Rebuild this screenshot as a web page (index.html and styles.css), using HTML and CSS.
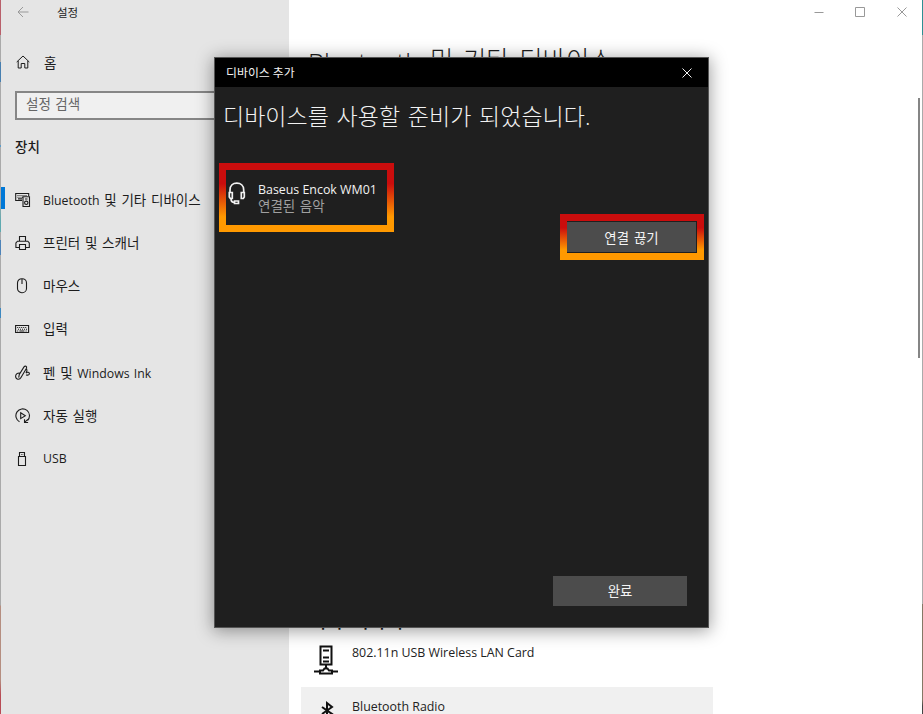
FILE: index.html
```html
<!DOCTYPE html>
<html lang="ko">
<head>
<meta charset="utf-8">
<title>설정</title>
<link rel="stylesheet" href="styles.css">
</head>
<body>
<div class="window">
  <div class="edge edge-left"></div>
  <aside class="sidebar">
    <header class="side-title">
      <svg class="back" width="12" height="12" viewBox="0 0 12 12"><path d="M11.5 6H1M6 1L1 6l5 5"/></svg>
      <span>설정</span>
    </header>
    <a class="home">
      <svg width="14" height="14" viewBox="0 0 14 14"><path d="M.7 7L7 1l6.300 6M2.200 6v7h3V8.500h3.600V13h3V6"/></svg>
      <span>홈</span>
    </a>
    <div class="search">설정 검색</div>
    <h2 class="group">장치</h2>
    <nav class="nav">
      <a class="item active">
        <svg width="16" height="16" viewBox="0 0 16 16"><path d="M7 8.500H.7v-7h13V4M2.500 3.500h1m1 0h1m1 0h1m1 0h1m1 0h1M2.500 5.200h1m1 0h1m1 0h1M3 6.900h4M8 4.800h6.500v9.700H8zM10 7h2.500"/><circle cx="11.250" cy="10.800" r="1.700"/></svg>
        <span><b class="latin">Bluetooth</b> 및 기타 디바이스</span></a>
      <a class="item">
        <svg width="16" height="16" viewBox="0 0 16 16"><path d="M4.500 6V1.500h6V6M4 12.500H.9V8L2.500 6.200h10.300L14.300 8v4.500H11M4.500 9.500h6v5h-6z"/></svg>
        <span>프린터 및 스캐너</span></a>
      <a class="item">
        <svg width="16" height="16" viewBox="0 0 16 16"><rect x="2.500" y=".7" width="9" height="14" rx="4.300"/><path d="M7 1v5"/></svg>
        <span>마우스</span></a>
      <a class="item">
        <svg width="16" height="16" viewBox="0 0 16 16"><path d="M.6 4.500h13v7H.6zM2.200 6.500h1m1 0h1m1 0h1m1 0h1m1 0h1M3 8.200h1m1 0h1m1 0h1m1 0h1m1 0h1M2.200 10h1m1.200 0h5m1.200 0h1"/></svg>
        <span>입력</span></a>
      <a class="item">
        <svg width="16" height="16" viewBox="0 0 16 16"><path d="M5 8C2 7.700.6 9.500.6 11.300c0 3.400 4 4 5.400 1.200l5.500-9.300c.7-1.800-1.300-2.800-2.500-1.300L4.300 9.500l-.6 3.200M11.700 4c.8 1.500.2 2.500-.7 4 1.500-1.300 3.200-.8 3.400.6.100 1.500-2 1.700-3.400 1.400"/></svg>
        <span>펜 및 <b class="latin">Windows Ink</b></span></a>
      <a class="item">
        <svg width="16" height="16" viewBox="0 0 16 16"><path d="M4.500 13.700A6.800 6.800 0 1 1 12.500 12.500M9.500 11.200v3.300h3.600M9.500 14.300l3.300-3M5.700 4.800l4.600 2.900-4.600 2.900z"/></svg>
        <span>자동 실행</span></a>
      <a class="item">
        <svg width="16" height="16" viewBox="0 0 16 16"><path d="M3.500 5.500h7v9h-7zM4.500 5.500v-4h5v4M6 3.500h.6m1 0h.6"/></svg>
        <span><b class="latin">USB</b></span></a>
    </nav>
  </aside>

  <main class="content">
    <div class="controls">
      <svg width="10" height="10" viewBox="0 0 10 10"><path d="M.5 5.500h9"/></svg>
      <svg width="10" height="10" viewBox="0 0 10 10"><path d="M.5.500h9v9h-9z"/></svg>
      <svg width="10" height="10" viewBox="0 0 10 10"><path d="M.5.500l9 9M9.500.500l-9 9"/></svg>
    </div>
    <h1 class="page-title"><span class="title-latin">Bluetooth</span> 및 기타 디바이스</h1>
    <section class="others">
      <h2>기타 디바이스</h2>
      <div class="device">
        <svg width="24" height="30" viewBox="0 0 24 30"><path d="M6.500 1.500h11v18h-11zM9 5.500h6M9 12.500h6M9 16.500h6M12 20v3M0 26.500h6m12 0h6M6 28.500h12v-3h-3l-1.500-2h-3L9 25.500H6z"/></svg>
        <span>802.11n USB Wireless LAN Card</span>
      </div>
      <div class="device shaded">
        <svg width="24" height="30" viewBox="0 0 24 30"><path d="M8 8l10 7-5 5V4l5 4-10 7"/></svg>
        <span>Bluetooth Radio</span>
      </div>
    </section>
  </main>
  <div class="edge edge-right"></div>
  <div class="scroll-thumb"></div>
</div>

<section class="dialog">
  <header class="dialog-bar">
    <span>디바이스 추가</span>
    <svg width="10" height="10" viewBox="0 0 10 10"><path d="M.5.500l9 9M9.500.500l-9 9"/></svg>
  </header>
  <h1 class="dialog-title">디바이스를 사용할 준비가 되었습니다.</h1>
  <div class="paired frame">
    <svg width="18" height="24" viewBox="0 0 18 24"><path d="M2 11V8C2 3.500 5 1.200 8.800 1.200S15.700 3.500 15.700 8v3M1.300 10.500h3v6h-2l-1-1.500zM13.300 10.500h3V15l-1 1.500h-2zM3 16.500c0 3 1.500 4 3.500 4M6.500 19h4v2.500h-4z"/></svg>
    <div class="paired-text">
      <div class="device-name">Baseus Encok WM01</div>
      <div class="device-state">연결된 음악</div>
    </div>
  </div>
  <div class="disconnect frame"><button>연결 끊기</button></div>
  <button class="done">완료</button>
</section>
</body>
</html>
```

FILE: styles.css
```css
* { box-sizing: border-box; }
body {
  margin: 0;
  width: 923px;
  height: 714px;
  overflow: hidden;
  position: relative;
  background: #fff;
  color: #1c1c1c;
  font-family: "Open Sans", "Noto Sans CJK KR", sans-serif;
  font-size: 12.5px;
}
h1, h2 { margin: 0; font-weight: 400; }
span, h1, h2 { white-space: nowrap; }
svg { fill: none; stroke: currentColor; flex: none; display: block; }

.window { display: flex; width: 923px; height: 714px; overflow: hidden; }
.edge { width: 1px; flex: none; }
.edge-left { background: linear-gradient(#b9606b 0 35px, #aaa 35px 62px, #477fb0 62px 82px, #aaa 82px 145px, #5e9cc8 145px 147px, #aaa 147px 198px, #5eaab0 222px 232px, #aaa 232px 240px, #4d83b8 240px 255px, #aaa 255px 308px, #3d88c0 308px 318px, #aaa 318px 605px, #b58e80 606px 680px, #b84b55 695px); }
.edge-right { background: linear-gradient(#2d8f93 0 35px, #aaa 35px 604px, #857866 604px 700px, #444 706px); }
.sidebar { width: 288px; flex: none; background: #e5e5e5; }
.side-title { display: flex; align-items: center; height: 24px; padding-left: 16px; gap: 28px; font-size: 11.5px; }
.back { color: #999; }
.home { display: flex; align-items: center; height: 28px; margin: 24px 0 15px; padding-left: 15px; gap: 14px; font-size: 13.5px; }
.home span { margin-top: -1px; }
.search {
  height: 29px;
  margin-left: 14px;
  border: 2px solid #868686;
  background: #f0f0f0;
  color: #666;
  padding-left: 9px;
  line-height: 23px;
  font-size: 13.5px;
  word-spacing: 1px;
}
.group { margin: 17px 0 0 14px; height: 20px; line-height: 20px; font-size: 13.5px; font-weight: 500; }
.nav { margin-top: 21px; }
.item { display: flex; align-items: center; height: 43.25px; padding-left: 14px; gap: 12px; position: relative; font-size: 13.5px; }
.item svg { stroke-width: 1.1; }
.active::before { content: ""; position: absolute; left: 0; top: 9px; width: 4px; height: 22px; background: #0078d7; }
.item span { word-spacing: 1.2px; margin-top: -2px; }
.latin { font-weight: 400; font-size: 12.3px; word-spacing: 1px; }

.content { flex: 1; background: #fff; }
.controls { display: flex; justify-content: flex-end; gap: 31.5px; height: 24px; align-items: center; padding-right: 15.5px; color: #999; }
.page-title { margin: 17px 0 0 19px; height: 36px; line-height: 36px; font-size: 25.4px; font-weight: 300; word-spacing: 3px; }
.title-latin { position: relative; top: 3px; }
.others { margin-top: 532px; padding-left: 12px; width: 424px; }
.others h2 { height: 24px; line-height: 24px; padding-left: 8px; font-size: 18.8px; font-weight: 500; word-spacing: 3px; }
.device { display: flex; height: 54px; padding: 10px 0 0 13px; gap: 14px; color: #222; }
.device svg { stroke-width: 2; color: #111; margin-top: 2px; }
.device span { line-height: 20px; font-size: 12.4px; }
.shaded { background: #f0f0f0; }
.scroll-thumb { position: absolute; left: 918px; top: 98px; width: 2px; height: 260px; background: #858585; }

.dialog {
  position: absolute;
  left: 214px;
  top: 57px;
  width: 495px;
  height: 571px;
  border: 1px solid #555;
  background: #1f1f1f;
  color: #f2f2f2;
  box-shadow: 0 2px 16px 1px rgba(0, 0, 0, .38);
}
.dialog-bar { display: flex; justify-content: space-between; align-items: center; height: 29px; padding: 0 16px 0 11px; background: #000; font-size: 11.9px; line-height: 16px; }
.dialog-bar span { margin-top: -1px; }
.dialog-title { margin: 10px 0 0 8px; height: 39px; line-height: 38px; font-size: 23px; font-weight: 300; word-spacing: 1.8px; }
.frame { border: 7px solid #f90; border-image: linear-gradient(#ca0d0d 30%, #f90 78%) 7; }
.paired { display: flex; width: 175px; height: 69px; margin: 27px 0 0 4px; padding: 11px 0 0 2px; gap: 12px; }
.paired svg { stroke-width: 1.7; margin-top: 1px; }
.paired-text { white-space: nowrap; line-height: 17px; }
.device-name { font-size: 12.4px; }
.device-state { color: #a0a0a0; font-size: 13.5px; word-spacing: 1px; }
button { border: 0; padding: 0; background: #4c4c4c; color: #f5f5f5; font: inherit; font-size: 13.4px; display: block; }
.disconnect { width: 144px; height: 46px; margin: -18px 0 0 345px; padding-top: 1px; }
.disconnect button { width: 129px; height: 30px; word-spacing: 1.5px; }
.done { width: 134px; height: 30px; margin: 316px 0 0 338px; padding-bottom: 2px; }
```
